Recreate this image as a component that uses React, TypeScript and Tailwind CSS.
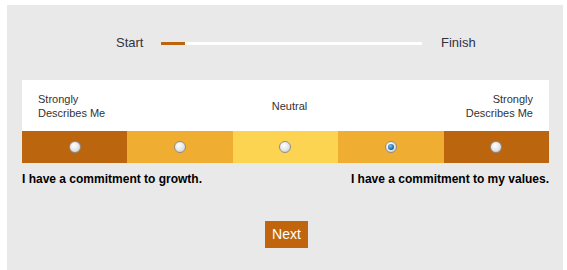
import React, { useState } from 'react';

const segments = ['bg-[#bb650f]', 'bg-[#efae31]', 'bg-[#fdd352]', 'bg-[#efae31]', 'bg-[#bb650f]'];

function Radio({ checked, onClick }: { checked: boolean; onClick: () => void }) {
  return (
    <button
      type="button"
      onClick={onClick}
      className="flex h-[12px] w-[12px] items-center justify-center rounded-full border border-[#8d8d8d] bg-[radial-gradient(circle_at_40%_35%,#ffffff_0%,#e4e4e4_55%,#c4c4c4_100%)]"
    >
      {checked && (
        <span className="h-[6px] w-[6px] rounded-full bg-[radial-gradient(circle_at_40%_35%,#7fc3ef_0%,#1d6ea8_60%,#0b3f66_100%)]" />
      )}
    </button>
  );
}

export default function App() {
  const [value, setValue] = useState(3);

  return (
    <div className="min-h-[270px] bg-white pl-[7px] pr-[4px] pt-[5px] font-['Liberation_Sans',Arial,sans-serif]">
      <div className="h-[265px] bg-[#e9e9e9] pl-[15px] pr-[14px] pt-[28px]">
        <div className="flex h-[20px] items-center pl-[94px] text-[13px] text-[#333340]">
          <span className="w-[45px]">Start</span>
          <div className="flex h-[3px] w-[261px] bg-white">
            <div className="h-full w-[24px] bg-[#bb650f]" />
          </div>
          <span className="ml-[19px]">Finish</span>
        </div>

        <div className="mt-[27px] flex h-[51px] items-center justify-between bg-white px-[16px] text-[11px] leading-[14px] text-[#333]">
          <span>
            Strongly
            <br />
            Describes Me
          </span>
          <span className="pl-[8px]">Neutral</span>
          <span className="text-right">
            Strongly
            <br />
            Describes Me
          </span>
        </div>

        <div className="grid h-[32px] grid-cols-5">
          {segments.map((bg, i) => (
            <div key={i} className={`flex items-center justify-center ${bg}`}>
              <Radio checked={value === i} onClick={() => setValue(i)} />
            </div>
          ))}
        </div>

        <div className="mt-[8px] flex justify-between text-[12px] font-bold leading-[16px] text-black">
          <span>I have a commitment to growth.</span>
          <span>I have a commitment to my values.</span>
        </div>

        <div className="mt-[34px] flex justify-center pl-[2px]">
          <button
            type="button"
            className="h-[27px] w-[43px] bg-[#c0650e] text-[14px] text-white"
          >
            Next
          </button>
        </div>
      </div>
    </div>
  );
}
